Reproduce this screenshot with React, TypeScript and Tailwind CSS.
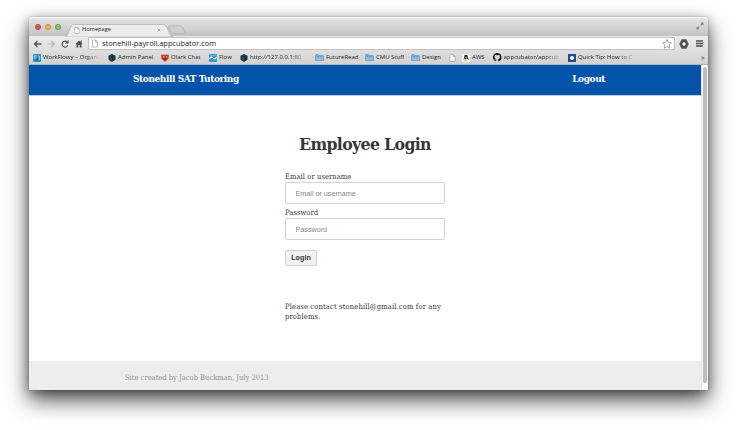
import React from "react";

const serif = "font-['DejaVu_Serif_Condensed','DejaVu_Serif',serif]";
const ui = "font-['Open_Sans','Noto_Sans',sans-serif] font-medium";

function PageIcon({ className }: { className: string }) {
  return (
    <svg viewBox="0 0 12 16" className={className}>
      <path d="M1 1h6.500l3.500 4v10H1z" fill="#fff" stroke="#8d8d8d" strokeWidth="1.2" />
      <path d="M7.500 1v4H11" fill="none" stroke="#8d8d8d" strokeWidth="1.2" />
    </svg>
  );
}

function Hexagon() {
  return (
    <svg viewBox="0 0 16 16" className="h-2 w-2 shrink-0">
      <path d="M8 0l7 3.500v8L8 16l-7-4.500v-8z" fill="#1d3444" />
      <path d="M5 5l3 3v5l-3-2z" fill="#2f5369" />
    </svg>
  );
}

function Folder() {
  return (
    <svg viewBox="0 0 18 15" className="h-[7.500px] w-[9px] shrink-0">
      <path d="M1 13V2.500q0-1.500 1.500-1.500h4L8 3h7.500Q17 3 17 4.500V13q0 1-1 1H2q-1 0-1-1z" fill="#6fa5ce" stroke="#5c8db3" />
      <path d="M2 6h14v7H2z" fill="#8bbce0" />
    </svg>
  );
}

function WorkflowyIcon() {
  return (
    <svg viewBox="0 0 16 16" className="h-2 w-2 shrink-0">
      <rect width="16" height="16" rx="2" fill="#2e8ec6" />
      <path d="M1 2h6v7H1z" fill="#6fbde8" />
      <path d="M5 13l5-7v7z" fill="#1b679f" />
      <path d="M10 3l3 2v7" stroke="#bfe5f7" strokeWidth="1.500" fill="none" />
    </svg>
  );
}

function OlarkIcon() {
  return (
    <svg viewBox="0 0 16 16" className="h-2 w-2 shrink-0">
      <path d="M0 2l5-1 3 1 3-1 5 1-1 8-3 2-4 4-4-4-3-2z" fill="#c83a25" />
      <circle cx="5" cy="5.500" r="1.300" fill="#efc3a8" />
      <circle cx="11" cy="5.500" r="1.300" fill="#efc3a8" />
      <path d="M6 8h4l-2 5z" fill="#71201b" />
    </svg>
  );
}

function FlowIcon() {
  return (
    <svg viewBox="0 0 16 16" className="h-2 w-2 shrink-0">
      <rect width="16" height="16" rx="2" fill="#2c9bd6" />
      <path d="M0 8q5-5 8-1t8-2v3q-5 5-8 1t-8 2z" fill="#e7f6fd" />
      <path d="M2 3h12" stroke="#63bbe6" strokeWidth="2" />
    </svg>
  );
}

function AmazonIcon() {
  return (
    <span className="flex h-2 w-2 shrink-0 flex-col items-center rounded-[1px] bg-white">
      <span className="font-['Liberation_Sans',sans-serif] text-[8px] leading-[5.500px] font-bold text-black">a</span>
      <svg viewBox="0 0 16 5" className="h-[2.500px] w-2">
        <path d="M2 1q6 4 12 0" fill="none" stroke="#f39a1d" strokeWidth="2" />
      </svg>
    </span>
  );
}

function GithubIcon() {
  return (
    <svg viewBox="0 0 16 16" className="h-[8.500px] w-[8.500px] shrink-0">
      <path
        d="M8 0C3.580 0 0 3.580 0 8c0 3.540 2.290 6.530 5.470 7.590.4.070.55-.17.55-.38v-1.490c-2.010.37-2.530-.49-2.690-.94-.09-.23-.48-.94-.82-1.130-.28-.15-.68-.52-.01-.53.63-.01 1.080.58 1.230.82.72 1.210 1.870.87 2.330.66.07-.52.28-.87.51-1.070-1.780-.2-3.640-.89-3.640-3.950 0-.87.31-1.590.82-2.150-.08-.2-.36-1.020.08-2.120 0 0 .67-.21 2.200.82a7.600 7.600 0 0 1 4 0c1.530-1.040 2.200-.82 2.200-.82.44 1.100.16 1.920.08 2.120.51.56.82 1.270.82 2.150 0 3.070-1.870 3.750-3.650 3.950.29.25.54.73.54 1.480v2.200c0 .21.15.46.55.38A8 8 0 0 0 16 8c0-4.420-3.580-8-8-8z"
        fill="#111"
      />
    </svg>
  );
}

function TipIcon() {
  return (
    <svg viewBox="0 0 16 16" className="h-2 w-2 shrink-0">
      <rect width="16" height="16" fill="#1e4a98" />
      <circle cx="8" cy="8" r="4" fill="#fff" />
    </svg>
  );
}

const fade = "[mask-image:linear-gradient(to_right,black_70%,transparent)]";

type Item = { icon: React.ReactNode; label: string; slot: string; text?: string };

const bookmarks: Item[] = [
  { icon: <WorkflowyIcon />, label: "WorkFlowy – Organi", slot: "w-[75px]", text: `w-[58px] ${fade}` },
  { icon: <Hexagon />, label: "Admin Panel", slot: "w-[53px]" },
  { icon: <OlarkIcon />, label: "Olark Chat", slot: "w-[48px]" },
  { icon: <FlowIcon />, label: "Flow", slot: "w-[31px]" },
  { icon: <Hexagon />, label: "http://127.0.0.1:80", slot: "w-[75px]", text: `w-[58px] ${fade}` },
  { icon: <Folder />, label: "FutureRead", slot: "w-[50px]" },
  { icon: <Folder />, label: "CMU Stuff", slot: "w-[46px]" },
  { icon: <Folder />, label: "Design", slot: "w-[38px]" },
  { icon: <PageIcon className="h-2 w-[7px] shrink-0" />, label: "", slot: "w-[13px]" },
  { icon: <AmazonIcon />, label: "AWS", slot: "w-[31px]" },
  { icon: <GithubIcon />, label: "appcubator/appcub", slot: "w-[75px]", text: `w-[58px] ${fade}` },
  { icon: <TipIcon />, label: "Quick Tip: How to C", slot: "w-[133px]", text: `w-[58px] ${fade}` },
];

function TabStrip() {
  return (
    <div className="relative flex h-[19px] shrink-0 items-start rounded-t-[3px] border-t border-[#f7f7f7] bg-linear-to-b from-[#e5e5e5] to-[#c2c2c2]">
      <div className="flex gap-1 pt-[6px] pl-[6px]">
        <span className="h-[6px] w-[6px] rounded-full border border-[#bd3f46] bg-[#e8525a]" />
        <span className="h-[6px] w-[6px] rounded-full border border-[#bf8a38] bg-[#f2b84a]" />
        <span className="h-[6px] w-[6px] rounded-full border border-[#5c9950] bg-[#85c872]" />
      </div>
      <svg viewBox="0 0 124 13" className="absolute top-[6px] left-[36px] h-[13px] w-[124px]">
        <path d="M104 2h11q2 0 3 2l2 4q0 1.500-2 1.500h-9q-2 0-3-2l-2-4q0-1.500 0-1.500z" fill="#d0d0d0" stroke="#a6a6a6" strokeWidth=".6" />
        <path d="M0 13q2 0 3-3L6 2q1-1.500 3-1.500h89q2 0 3 1.500l4 8q1 3 3 3z" fill="#ededed" stroke="#a3a3a3" strokeWidth=".6" />
      </svg>
      <div className="relative ml-[13px] flex h-[17px] w-[87px] items-center pt-[7px]">
        <PageIcon className="h-[7px] w-[6px]" />
        <span className={`ml-[2px] text-[5.700px] leading-none text-[#222] ${ui}`}>Homepage</span>
        <svg viewBox="0 0 6 6" className="ml-auto h-1 w-1">
          <path d="M1 1l4 4M5 1L1 5" stroke="#777" strokeWidth="1" />
        </svg>
      </div>
      <svg viewBox="0 0 16 16" className="absolute top-[4px] right-[4px] h-2 w-2" fill="#858585">
        <path d="M9 1h6v6l-2-2-2.500 2.500-2-2L11 3zM7 15H1V9l2 2 2.500-2.500 2 2L5 13z" />
      </svg>
    </div>
  );
}

function Toolbar() {
  return (
    <div className="flex h-[15px] shrink-0 items-center bg-linear-to-b from-[#ececec] to-[#dedede] pl-1">
      <svg viewBox="0 0 18 16" className="h-2 w-[9px]" fill="none" stroke="#505050" strokeWidth="2.600">
        <path d="M17 8H3M9 2L3 8l6 6" />
      </svg>
      <svg viewBox="0 0 18 16" className="ml-[5px] h-2 w-[9px]" fill="none" stroke="#b8b8b8" strokeWidth="2.200">
        <path d="M1 8h14M9 2l6 6-6 6" />
      </svg>
      <svg viewBox="0 0 16 16" className="ml-[5px] h-2 w-2">
        <path d="M13.500 11A6 6 0 1 1 12 3.500" fill="none" stroke="#505050" strokeWidth="2.300" />
        <path d="M15 0v7H8z" fill="#505050" />
      </svg>
      <svg viewBox="0 0 16 16" className="ml-[6px] h-2 w-2" fill="#505050">
        <path d="M8 1l7 7-1 1-1-1v7H9.500v-5h-3v5H3V8L2 9 1 8zM11 1h2.500v5L11 4z" />
      </svg>
      <div className="ml-[5px] flex h-[13px] w-[587px] items-center rounded-[1px] border border-[#c2c2c2] bg-white pr-[2px] pl-[3px]">
        <PageIcon className="h-[9px] w-[6px]" />
        <span className={`ml-1 text-[7.400px] leading-none text-[#222] ${ui}`}>stonehill-payroll.appcubator.com</span>
        <svg viewBox="0 0 20 20" className="ml-auto h-[10px] w-[10px]">
          <path d="M10 1l2.700 6 6.300.7-4.700 4.300L15.700 18.500 10 15.200 4.300 18.500 5.700 12 1 7.700 7.300 7z" fill="#fff" stroke="#888" strokeWidth="1.400" />
        </svg>
      </div>
      <svg viewBox="0 0 18 18" className="ml-[4px] h-[10px] w-[10px]">
        <path d="M5 1h8l4 8-4 8H5L1 9z" fill="#505050" stroke="#505050" strokeLinejoin="round" />
        <path d="M9 6v6M6 9h6" stroke="#fff" strokeWidth="3" />
      </svg>
      <svg viewBox="0 0 14 14" className="ml-[7px] h-[7px] w-[7px]">
        <path d="M0 2h14M0 7h14M0 12h14" stroke="#505050" strokeWidth="3" />
      </svg>
    </div>
  );
}

function BookmarkBar() {
  return (
    <div className="flex h-[14px] shrink-0 items-center border-b border-[#a9b4bd] bg-linear-to-b from-[#dedede] to-[#d2d2d2] pl-1">
      {bookmarks.map((b, i) => (
        <div key={i} className={`flex shrink-0 items-center gap-[2px] ${b.slot}`}>
          {b.icon}
          <span className={`overflow-hidden text-[6px] leading-[9px] whitespace-nowrap text-[#222] ${ui} ${b.text ?? ""}`}>
            {b.label}
          </span>
        </div>
      ))}
      <span className={`text-[7px] leading-none text-[#444] ${ui}`}>»</span>
    </div>
  );
}

function Field({ label, type }: { label: string; type: string }) {
  return (
    <label className="flex flex-col">
      <span className="h-[10px] text-[7.500px] leading-[10px] tracking-[0.080px]">{label}</span>
      <input
        type={type}
        placeholder={label}
        className="h-[22px] w-[160px] rounded-[2px] border border-[#d2d2d2] bg-white pl-[9.500px] font-['Liberation_Sans',Arial,sans-serif] text-[7.200px] placeholder:text-[#858585]"
      />
    </label>
  );
}

export default function App() {
  return (
    <div className="h-[430px] w-[737px] overflow-hidden bg-white pt-[17px] pl-[29px]">
      <div className="flex h-[373px] w-[679px] flex-col rounded-t-[3px] shadow-[0_10px_22px_rgba(0,0,0,0.700),0_2px_10px_rgba(0,0,0,0.300),0_0_1px_rgba(0,0,0,0.500)]">
        <TabStrip />
        <Toolbar />
        <BookmarkBar />
        <div className="flex min-h-0 flex-1">
          <main className={`flex w-[672px] flex-col bg-white text-[#333740] ${serif}`}>
            <header className="flex h-[31px] shrink-0 items-center justify-between border-b border-[#bccde0] bg-[#0354a9] pr-[96px] pb-[3px] pl-[104px] text-[10px] font-bold tracking-[-0.420px] text-white">
              <span>Stonehill SAT Tutoring</span>
              <span>Logout</span>
            </header>
            <section className="flex flex-1 flex-col pl-[256px]">
              <h1 className="mt-[35px] h-[26px] w-[160px] text-center text-[17.500px] leading-[26px] font-bold tracking-[-0.640px] whitespace-nowrap">
                Employee Login
              </h1>
              <div className="mt-[15px] flex flex-col gap-1">
                <Field label="Email or username" type="text" />
                <Field label="Password" type="password" />
              </div>
              <button className="mt-[10px] h-4 w-8 rounded-[2px] border border-[#d2d2d2] bg-[#f2f2f3] font-['Liberation_Sans',Arial,sans-serif] text-[7.200px] leading-none font-bold">
                Login
              </button>
              <p className="mt-[36px] w-[165px] text-[7.500px] leading-[10px] tracking-[0.150px]">
                Please contact stonehill@gmail.com for any
                <br />
                problems.
              </p>
            </section>
            <footer className="flex h-[29px] shrink-0 items-center bg-[#ededed] pt-[5px] pl-[96px] text-[7.500px] text-[#929292]">
              Site created by Jacob Buckman, July 2013
            </footer>
          </main>
          <aside className="flex w-[7px] justify-center border-l border-[#e4e4e4] bg-[#fafafa] pt-[2px]">
            <div className="h-[316px] w-1 rounded-full bg-[#bdbdbd]" />
          </aside>
        </div>
      </div>
    </div>
  );
}
